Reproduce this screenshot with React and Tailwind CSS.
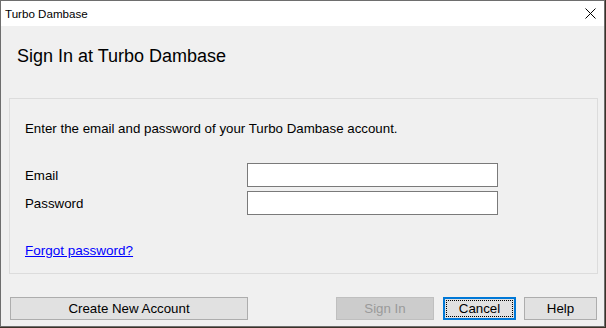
import React from 'react';

const font = { fontFamily: '"Liberation Sans", Arial, sans-serif' };

const CloseIcon = () => (
  <svg width="11" height="11" viewBox="0 0 11 11" className="block">
    <path d="M0.5 0.5 L10.5 10.5 M10.5 0.5 L0.5 10.5" stroke="#000" strokeWidth="1" />
  </svg>
);

const Field = ({ label }) => (
  <div className="flex items-center h-[24px]">
    <span className="w-[222px]">{label}</span>
    <div className="w-[251px] h-[24px] bg-white border border-[#7a7a7a]"></div>
  </div>
);

export default function App() {
  return (
    <div className="w-[606px] h-[328px] bg-[#3b3228] text-black text-[13.3px]" style={font}>
      <div className="w-[605px] h-[327px] border border-[#6e6e6e] flex flex-col bg-[#f0f0f0]">
        {/* title bar */}
        <div className="h-[25px] bg-white flex items-center justify-between pl-[4px] pr-[8px]">
          <span className="text-[11.6px] leading-[14px]">Turbo Dambase</span>
          <CloseIcon />
        </div>

        <div className="flex-1 flex flex-col">
          <h1 className="mt-[20px] ml-[16px] text-[18px] leading-[20px]">Sign In at Turbo Dambase</h1>

          <div className="mt-[32px] ml-[8px] w-[589px] border border-[#dcdcdc] pt-[22px] pl-[15px] pb-[15px] leading-[15px]">
            <p>Enter the email and password of your Turbo Dambase account.</p>
            <div className="mt-[27px] flex flex-col gap-[4px]">
              <Field label="Email" />
              <Field label="Password" />
            </div>
            <a href="#" className="block mt-[28px] w-fit text-[13.5px] text-[#0000ff] underline">Forgot password?</a>
          </div>

          <div className="mt-[23px] flex pl-[9px] pr-[7px]">
            <button className="w-[238px] h-[23px] bg-[#e1e1e1] border border-[#adadad] leading-[21px]">Create New Account</button>
            <div className="flex-1"></div>
            <button disabled className="w-[98px] h-[23px] bg-[#cccccc] border border-[#bfbfbf] text-[#9a9a9a] leading-[21px]">Sign In</button>
            <button className="ml-[9px] w-[73px] h-[23px] bg-[#e1e1e1] border-2 border-[#0078d7] p-[1px]">
              <span className="block h-full border border-dotted border-black leading-[15px]">Cancel</span>
            </button>
            <button className="ml-[8px] w-[73px] h-[23px] bg-[#e1e1e1] border border-[#adadad] leading-[21px]">Help</button>
          </div>
        </div>
      </div>
    </div>
  );
}
